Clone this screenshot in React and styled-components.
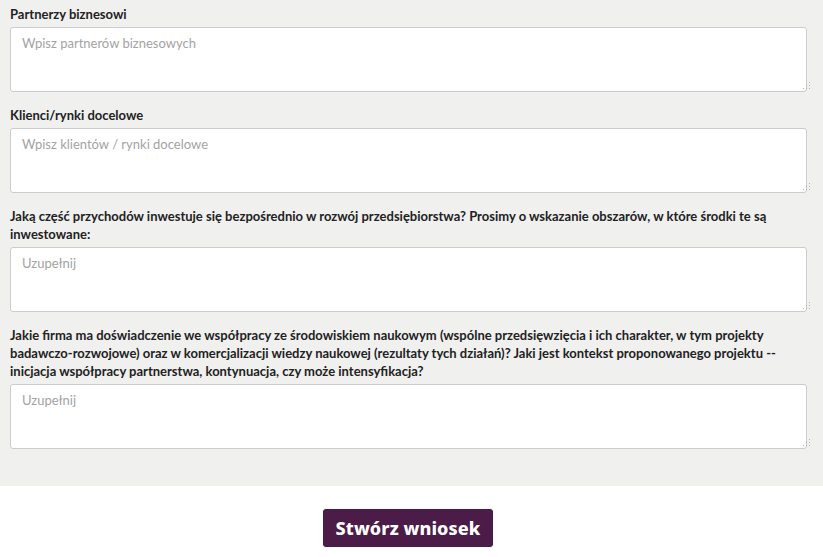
import React from "react"
import styled, { createGlobalStyle } from "styled-components"

const GlobalStyle = createGlobalStyle`
  body {
    margin: 0;
    background: #fff;
    font-family: Lato, "Liberation Sans", sans-serif;
  }
`

const FormSection = styled.section`
  background: #f0f0ef;
  padding: 5px 16px 37px 10px;
`

const Field = styled.div`
  margin-bottom: 14px;

  &:last-child {
    margin-bottom: 0;
  }
`

const Label = styled.label`
  display: block;
  font-size: 13px;
  font-weight: 700;
  line-height: 18px;
  color: #222;
  margin-bottom: 4px;
`

const InputWrap = styled.div`
  position: relative;
`

const TextArea = styled.textarea`
  display: block;
  box-sizing: border-box;
  width: 100%;
  height: 65px;
  padding: 6px 11px;
  border: 1px solid #ccc;
  border-radius: 3px;
  background: #fff;
  font-family: Lato, "Liberation Sans", sans-serif;
  font-size: 13px;
  line-height: 18px;
  color: #333;
  resize: none;
  outline: none;

  &::placeholder {
    color: #a3a3a3;
  }
`

/* dotted resize grip in the bottom right corner */
const Grip = styled.span`
  position: absolute;
  right: 9px;
  bottom: 9px;
  width: 1px;
  height: 1px;
  background: #b5b5b5;
  box-shadow: 3px 0 #b5b5b5, 6px 0 #b5b5b5, 3px -3px #b5b5b5, 6px -3px #b5b5b5,
    6px -6px #b5b5b5;
  transform: translate(6px, 6px);
  pointer-events: none;
`

const Footer = styled.div`
  display: flex;
  justify-content: center;
  padding: 23px 7px 10px 0;
`

const SubmitButton = styled.button`
  width: 170px;
  height: 38px;
  background: #4b1c47;
  color: #fff;
  border: none;
  border-radius: 3px;
  font-family: "Noto Sans", "DejaVu Sans", sans-serif;
  font-size: 18px;
  font-weight: 800;
  letter-spacing: 0.1px;
  cursor: pointer;
`

const fields = [
  { label: "Partnerzy biznesowi", placeholder: "Wpisz partnerów biznesowych" },
  { label: "Klienci/rynki docelowe", placeholder: "Wpisz klientów / rynki docelowe" },
  {
    label:
      "Jaką część przychodów inwestuje się bezpośrednio w rozwój przedsiębiorstwa? Prosimy o wskazanie obszarów, w które środki te są inwestowane:",
    placeholder: "Uzupełnij",
  },
  {
    label:
      "Jakie firma ma doświadczenie we współpracy ze środowiskiem naukowym (wspólne przedsięwzięcia i ich charakter, w tym projekty badawczo-rozwojowe) oraz w komercjalizacji wiedzy naukowej (rezultaty tych działań)? Jaki jest kontekst proponowanego projektu -- inicjacja współpracy partnerstwa, kontynuacja, czy może intensyfikacja?",
    placeholder: "Uzupełnij",
  },
]

const App = () => {
  return (
    <>
      <GlobalStyle />
      <FormSection>
        {fields.map((f, i) => (
          <Field key={i}>
            <Label htmlFor={`field-${i}`}>{f.label}</Label>
            <InputWrap>
              <TextArea id={`field-${i}`} placeholder={f.placeholder} />
              <Grip />
            </InputWrap>
          </Field>
        ))}
      </FormSection>
      <Footer>
        <SubmitButton>Stwórz wniosek</SubmitButton>
      </Footer>
    </>
  )
}

export default App
